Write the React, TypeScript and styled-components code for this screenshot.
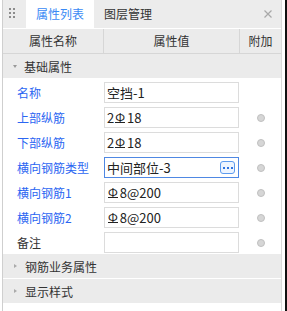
import * as React from 'react'
import styled, { createGlobalStyle } from 'styled-components'

const GlobalStyle = createGlobalStyle`
    body {
        margin: 0;
        background: #fff;
        font-family: "Noto Sans CJK SC", "Noto Sans", sans-serif;
        font-size: 12px;
        color: #333;
    }
`

const StyledRoot = styled.div`
    display: flex;
    width: 287px;
    height: 311px;
    padding-left: 2px;
    box-sizing: border-box;
`

const StyledPanel = styled.div`
    width: 280px;
    display: flex;
    flex-direction: column;
    border-left: 1px solid #cfcfcf;
    border-right: 1px solid #dadada;
    box-sizing: border-box;
    background: #fff;
`

const StyledEdge = styled.div`
    width: 2px;
    margin-left: 3px;
    background: #111;
`

const StyledTabBar = styled.div`
    display: flex;
    height: 28px;
    background: #ececec;
    border-bottom: 1px solid #fff;
`

const StyledGrip = styled.div`
    width: 23px;
    padding: 8px 0 0 6px;
    box-sizing: border-box;
    display: grid;
    grid-template-columns: repeat(2, 2px);
    grid-auto-rows: 2px;
    gap: 2px;
    align-content: start;

    span {
        background: #8c8c8c;
    }
`

const StyledTab = styled.div<{ $active?: boolean }>`
    width: 68px;
    line-height: 28px;
    text-align: center;
    background: ${(p) => (p.$active ? '#fff' : 'transparent')};
    color: ${(p) => (p.$active ? '#3a8af5' : '#333')};
`

const StyledClose = styled.div`
    margin-left: auto;
    margin-right: 9px;
    display: flex;
    align-items: center;
`

const StyledHeader = styled.div`
    display: grid;
    grid-template-columns: 101px 136px 1fr;
    height: 24px;
    background: #ebebeb;
    border-bottom: 1px solid #d6d6d6;
`

const StyledHeadCell = styled.div<{ $last?: boolean }>`
    line-height: 24px;
    text-align: center;
    border-right: ${(p) => (p.$last ? 'none' : '1px solid #d6d6d6')};
`

const StyledGroup = styled.div`
    display: flex;
    align-items: center;
    height: 24px;
    padding-left: 10px;
    background: #ebebeb;
    border-bottom: 1px solid #fff;
`

const StyledArrow = styled.span<{ $open?: boolean }>`
    width: 0;
    height: 0;
    margin-right: ${(p) => (p.$open ? '7px' : '8px')};
    border-style: solid;
    border-color: transparent;
    ${(p) =>
        p.$open
            ? 'border-width: 3px 2.5px 0 2.5px; border-top-color: #999;'
            : 'border-width: 2.5px 0 2.5px 3px; border-left-color: #aaa; margin-left: 1px;'}
`

const StyledRow = styled.div`
    display: grid;
    grid-template-columns: 101px 136px 1fr;
    align-items: start;
    height: 25px;
    padding-top: 3px;
    box-sizing: border-box;
`

const StyledLabel = styled.div<{ $plain?: boolean }>`
    height: 21px;
    line-height: 21px;
    padding-left: 14px;
    color: ${(p) => (p.$plain ? '#333' : '#2b66f2')};
`

const StyledBox = styled.div<{ $focus?: boolean }>`
    width: 135px;
    height: 21px;
    box-sizing: border-box;
    display: flex;
    align-items: center;
    justify-content: space-between;
    padding: 0 3px 0 2px;
    border: 1px solid ${(p) => (p.$focus ? '#4f88e3' : '#dcdcdc')};
    font-size: 13px;
    color: #222;
    white-space: nowrap;
`

const StyledRebar = styled.span`
    display: inline-block;
    font-size: 12px;
    line-height: 10px;
    border-bottom: 1px solid currentColor;
    margin: 0 2px 0 1px;
    vertical-align: 1px;
`

const StyledMore = styled.span`
    width: 15px;
    height: 13px;
    box-sizing: border-box;
    display: flex;
    align-items: center;
    justify-content: center;
    gap: 2px;
    border: 1px solid #5d9bee;
    border-radius: 3px;
    background: #eef5ff;

    i {
        width: 2px;
        height: 2px;
        background: #2f73e0;
    }
`

const StyledExtra = styled.div`
    height: 21px;
    display: flex;
    align-items: center;
    justify-content: center;
`

const StyledDot = styled.span`
    width: 8px;
    height: 8px;
    box-sizing: border-box;
    border-radius: 50%;
    background: #d6d6d6;
    border: 1px solid #c0c0c0;
`

interface Prop {
    label: string
    value: React.ReactNode
    plain?: boolean
    focus?: boolean
    dot?: boolean
}

const Rebar = () => <StyledRebar>Ф</StyledRebar>

const props: Prop[] = [
    { label: '名称', value: '空挡-1' },
    { label: '上部纵筋', value: <>2<Rebar />18</>, dot: true },
    { label: '下部纵筋', value: <>2<Rebar />18</>, dot: true },
    { label: '横向钢筋类型', value: '中间部位-3', focus: true, dot: true },
    { label: '横向钢筋1', value: <><Rebar />8@200</>, dot: true },
    { label: '横向钢筋2', value: <><Rebar />8@200</>, dot: true },
    { label: '备注', value: '', plain: true, dot: true },
]

const App = () => {
    return (
        <>
            <GlobalStyle />
            <StyledRoot>
                <StyledPanel>
                    <StyledTabBar>
                        <StyledGrip>
                            {[0, 1, 2, 3, 4, 5].map((i) => (
                                <span key={i} />
                            ))}
                        </StyledGrip>
                        <StyledTab $active>属性列表</StyledTab>
                        <StyledTab>图层管理</StyledTab>
                        <StyledClose>
                            <svg width="8" height="8" viewBox="0 0 8 8">
                                <path d="M0.5 0.5 L7.5 7.5 M7.5 0.5 L0.5 7.5" stroke="#a8a8a8" strokeWidth="1.2" />
                            </svg>
                        </StyledClose>
                    </StyledTabBar>
                    <StyledHeader>
                        <StyledHeadCell>属性名称</StyledHeadCell>
                        <StyledHeadCell>属性值</StyledHeadCell>
                        <StyledHeadCell $last>附加</StyledHeadCell>
                    </StyledHeader>
                    <StyledGroup>
                        <StyledArrow $open />
                        基础属性
                    </StyledGroup>
                    {props.map((p) => (
                        <StyledRow key={p.label}>
                            <StyledLabel $plain={p.plain}>{p.label}</StyledLabel>
                            <StyledBox $focus={p.focus}>
                                <span>{p.value}</span>
                                {p.focus && (
                                    <StyledMore>
                                        <i />
                                        <i />
                                        <i />
                                    </StyledMore>
                                )}
                            </StyledBox>
                            <StyledExtra>{p.dot && <StyledDot />}</StyledExtra>
                        </StyledRow>
                    ))}
                    <StyledGroup>
                        <StyledArrow />
                        钢筋业务属性
                    </StyledGroup>
                    <StyledGroup>
                        <StyledArrow />
                        显示样式
                    </StyledGroup>
                </StyledPanel>
                <StyledEdge />
            </StyledRoot>
        </>
    )
}

export default App
